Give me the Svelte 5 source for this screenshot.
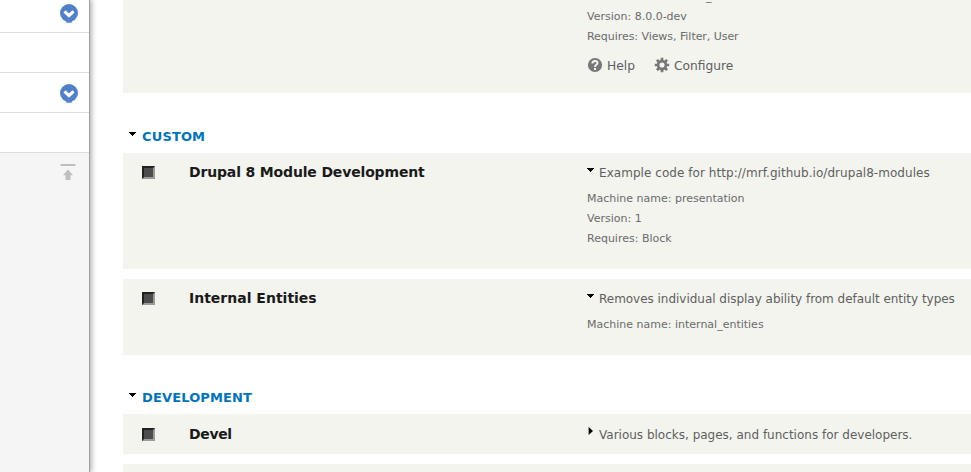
<script>
  const groups = [
    {
      title: 'Custom',
      modules: [
        {
          name: 'Drupal 8 Module Development',
          nameSpacing: -0.16,
          description: 'Example code for http://mrf.github.io/drupal8-modules',
          spacing: 0.05,
          open: true,
          height: 116,
          details: ['Machine name: presentation', 'Version: 1', 'Requires: Block'],
        },
        {
          name: 'Internal Entities',
          nameSpacing: 0,
          description: 'Removes individual display ability from default entity types',
          spacing: -0.025,
          open: true,
          height: 76,
          details: ['Machine name: internal_entities'],
        },
      ],
    },
    {
      title: 'Development',
      modules: [
        {
          name: 'Devel',
          nameSpacing: -0.35,
          description: 'Various blocks, pages, and functions for developers.',
          spacing: 0,
          open: false,
          height: 40,
          details: [],
        },
      ],
    },
  ];
  const trayRows = [true, false, true, false];
</script>

{#snippet arrow(open)}
  {#if open}
    <svg class="arrow" width="9" height="9" viewBox="0 0 9 9" shape-rendering="crispEdges">
      <path d="M0 2h7v1H0zM1 3h5v1H1zM2 4h3v1H2zM3 5h1v1H3z" />
    </svg>
  {:else}
    <svg class="arrow" width="9" height="9" viewBox="0 0 9 9">
      <path d="M1.6 0L6 4L1.6 8z" />
    </svg>
  {/if}
{/snippet}

<div class="page">
  <aside class="tray">
    {#each trayRows as expandable}
      <div class="tray-row">
        {#if expandable}
          <svg class="toggle" width="18" height="20" viewBox="0 0 18 20">
            <path d="M6.2 17h5.6v2h-5.6z" fill="#7ba1da" />
            <circle cx="9" cy="9" r="9" fill="#4f80c9" />
            <path d="M4.5 7.3L9 11.6L13.5 7.3" fill="none" stroke="#fff" stroke-width="3" />
          </svg>
        {/if}
      </div>
    {/each}
    <svg class="orient" width="16" height="17" viewBox="0 0 16 17">
      <path d="M.5 0h15v2H.5zM8 5.6L13 11.3H10.5V16h-5V11.3H3z" fill="#bfbfbf" />
    </svg>
  </aside>

  <main>
    <section class="card views">
      <div class="details">
        <div>Machine name: views_ui</div>
        <div>Version: 8.0.0-dev</div>
        <div class="requires">Requires: Views, Filter, User</div>
      </div>
      <div class="links">
        <a class="help" href="#help">
          <svg width="16" height="16" viewBox="0 0 16 16">
            <circle cx="8" cy="8" r="7.1" fill="#787878" />
            <path d="M5.4 6.4C5.4 3.2 10.5 3.1 10.5 6C10.5 7.8 8 7.8 8 9.9" fill="none" stroke="#f3f4ee" stroke-width="2" />
            <path d="M7 10.9h2v2H7z" fill="#f3f4ee" />
          </svg>
          <span>Help</span>
        </a>
        <a class="configure" href="#configure">
          <svg width="16" height="16" viewBox="0 0 16 16">
            <g stroke="#787878" fill="none">
              <circle cx="8" cy="8" r="3.9" stroke-width="2.7" />
              <path stroke-width="2.7" d="M8 .8V4M8 12v3.2M.8 8H4M12 8h3.2M2.9 2.9l2.3 2.3M10.8 10.8l2.3 2.3M2.9 13.1l2.3-2.3M10.8 5.2l2.3-2.3" />
            </g>
          </svg>
          <span>Configure</span>
        </a>
      </div>
    </section>

    {#each groups as group}
      <h2>{@render arrow(true)}<span>{group.title}</span></h2>
      {#each group.modules as module}
        <section class="card module" class:collapsed={!module.open} style="height: {module.height}px">
          <span class="checkbox" role="checkbox" aria-checked="false" aria-label={module.name} tabindex="0"></span>
          <h3 style="letter-spacing: {module.nameSpacing}px">{module.name}</h3>
          <div class="info">
            <div class="summary">
              {@render arrow(module.open)}<span style="letter-spacing: {module.spacing}px">{module.description}</span>
            </div>
            <div class="details">
              {#each module.details as line}<div>{line}</div>{/each}
            </div>
          </div>
        </section>
      {/each}
    {/each}
    <section class="card next"></section>
  </main>
</div>

<style>
  .page {
    display: flex;
    width: 971px;
    height: 472px;
    overflow: hidden;
    background: #fff;
    font-family: "DejaVu Sans", sans-serif;
    color: #5f5f5f;
  }
  .tray {
    box-sizing: border-box;
    flex: none;
    width: 90px;
    background: #f5f5f5;
    border-right: 1px solid #a0a0a0;
    box-shadow: 0 0 6px 1px rgba(0, 0, 0, .38);
    display: flex;
    flex-direction: column;
  }
  .tray-row {
    box-sizing: border-box;
    flex: none;
    height: 40px;
    background: #fff;
    border-bottom: 1px solid #ddd;
    padding: 11px 11px 0 0;
    display: flex;
    justify-content: flex-end;
  }
  .tray-row:first-child { height: 33px; padding-top: 4px; }
  .toggle { display: block; }
  .orient { align-self: flex-end; margin: 11px 13px 0 0; }
  main {
    flex: 1;
    min-width: 0;
    padding-left: 33px;
  }
  .card { background: #f3f4ee; overflow: hidden; }
  .views { height: 93px; }
  .views .details { margin: -13px 0 0 464px; }
  .details {
    font-size: 11px;
    line-height: 20px;
    color: #6b6b6b;
    white-space: nowrap;
  }
  .requires { letter-spacing: -.05px; }
  .links {
    display: flex;
    margin: 11px 0 0 464px;
    font-size: 12.25px;
    line-height: 16px;
  }
  .links a {
    display: flex;
    color: inherit;
    text-decoration: none;
  }
  .links span { margin-left: 4px; }
  .links svg { display: block; margin-top: -1px; }
  .help { width: 67px; }
  h2 {
    display: flex;
    align-items: center;
    height: 20px;
    margin: 34px 0 6px 6px;
    font-size: 13px;
    line-height: 20px;
    letter-spacing: .14px;
    color: #0074bd;
    text-transform: uppercase;
  }
  .module + h2 { margin-top: 33px; }
  h2 span { margin-left: 4px; }
  h2 .arrow { margin-top: -5px; }
  .arrow { flex: none; display: block; }
  .module { display: flex; }
  .module + .module, .next { margin-top: 10px; }
  .checkbox {
    box-sizing: border-box;
    width: 13px;
    height: 13px;
    margin: 13px 34px 0 19px;
    background: #4c4c4c;
    border: 2px solid;
    border-color: #202120 #9b9b9b #9b9b9b #202120;
  }
  h3 {
    width: 398px;
    margin: 9px 0 0;
    font-size: 14px;
    line-height: 20px;
    color: #1a1a1a;
  }
  .collapsed .checkbox { margin-top: 14px; }
  .collapsed h3 { margin-top: 10px; }
  .info { padding-top: 10px; }
  .summary {
    display: flex;
    height: 20px;
    margin-bottom: 6px;
    font-size: 12px;
    line-height: 20px;
    white-space: nowrap;
  }
  .summary .arrow { margin-top: 3px; }
  .summary span { margin-left: 3px; }
  .collapsed .summary span { margin-top: 1px; }
  .next { height: 20px; }
</style>
